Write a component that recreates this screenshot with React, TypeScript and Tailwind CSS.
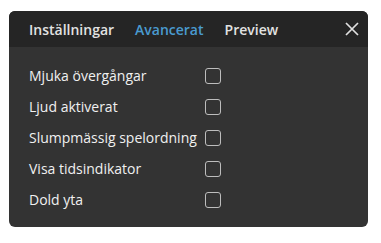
const options = [
  "Mjuka övergångar",
  "Ljud aktiverat",
  "Slumpmässig spelordning",
  "Visa tidsindikator",
  "Dold yta",
];

export default function App() {
  return (
    <div className="min-h-screen bg-white pl-[9px] pt-[11px] font-['Open_Sans',sans-serif]">
      <div className="w-[359px] overflow-hidden rounded-md bg-[#333333]">
        {/* header */}
        <div className="flex h-[36px] items-center bg-[#252525] pl-5 pr-[4px]">
          <div className="flex items-center gap-[21px] text-[14px] font-semibold">
            <span className="text-[#e2e2e2]">Inställningar</span>
            <span className="text-[#4a9bd0]">Avancerat</span>
            <span className="text-[#e2e2e2]">Preview</span>
          </div>
          <button className="ml-auto flex h-6 w-6 items-center justify-center">
            <svg width="14" height="14" viewBox="0 0 14 14" fill="none">
              <path d="M1 1L13 13M13 1L1 13" stroke="#e0e0e0" strokeWidth="1.7" />
            </svg>
          </button>
        </div>

        {/* options */}
        <div className="flex flex-col pl-5 pt-[13px] pb-[12px]">
          {options.map((label) => (
            <label key={label} className="flex h-[31px] items-center">
              <span className="w-[176px] text-[14px] text-[#f0f0f0]">{label}</span>
              <span className="h-4 w-4 rounded-[3px] border-[1.5px] border-[#bdbdbd]" />
            </label>
          ))}
        </div>
      </div>
    </div>
  );
}
